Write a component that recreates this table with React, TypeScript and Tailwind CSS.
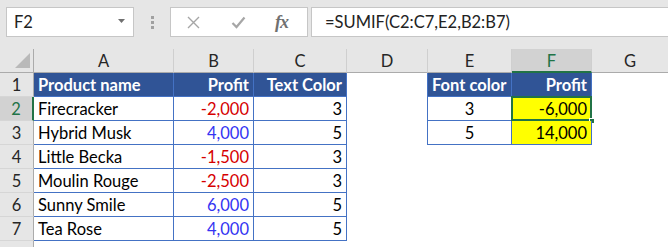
import React from "react";

const names = ["Firecracker", "Hybrid Musk", "Little Becka", "Moulin Rouge", "Sunny Smile", "Tea Rose"];
const profits: [string, boolean][] = [
  ["-2,000", true],
  ["4,000", false],
  ["-1,500", true],
  ["-2,500", true],
  ["6,000", false],
  ["4,000", false],
];
const colors = ["3", "5", "3", "3", "5", "5"];

const base = "h-[24px] overflow-hidden whitespace-nowrap leading-[24px] px-[4px]";
const colHead = base + " bg-[#e6e6e6] border-r border-b border-r-[#cfcfcf] border-b-[#ababab] text-center text-[#262626]";
const colHeadSel = base + " bg-[#d2d2d2] border-r border-b-2 border-r-[#cfcfcf] border-b-[#217346] text-center text-[#217346]";
const rowHead = base + " bg-[#e6e6e6] border-r border-b border-r-[#ababab] border-b-[#d6d6d6] text-center text-[#262626]";
const rowHeadSel = base + " bg-[#d2d2d2] border-r-2 border-b border-r-[#217346] border-b-[#d6d6d6] text-center text-[#217346]";
const tblHead = base + " bg-[#305496] text-white font-bold border-r border-b border-[#4472c4]";
const tblCell = base + " bg-white border-r border-b border-[#4472c4]";

function Toolbar() {
  return (
    <div className="h-[49px] bg-[#e6e6e6] flex items-start pt-[7px] pl-[6px]">
      <div className="w-[128px] h-[30px] bg-white border border-[#c6c6c6] flex items-center justify-between pl-[7px] pr-[8px]">
        <span className="text-[16.5px] text-[#222]">F2</span>
        <svg width="7" height="4" viewBox="0 0 7 4" className="mt-[-2px]">
          <polygon points="0,0 7,0 3.5,4" fill="#707070" />
        </svg>
      </div>
      <div className="ml-[17px] mt-[9px] flex flex-col gap-[2px]">
        <div className="w-[3px] h-[3px] bg-[#a0a0a0]" />
        <div className="w-[3px] h-[3px] bg-[#a0a0a0]" />
        <div className="w-[3px] h-[3px] bg-[#a0a0a0]" />
      </div>
      <div className="ml-[16px] w-[138px] h-[30px] bg-white border border-[#c6c6c6] flex items-center">
        <svg width="13" height="13" viewBox="0 0 13 13" className="ml-[16px]">
          <path d="M1 1 L12 12 M12 1 L1 12" stroke="#a6a6a6" strokeWidth="1.4" fill="none" />
        </svg>
        <svg width="15" height="13" viewBox="0 0 15 13" className="ml-[31px]">
          <path d="M1.5 7 L5.5 11 L13.5 1.5" stroke="#a6a6a6" strokeWidth="2.2" fill="none" strokeLinejoin="miter" />
        </svg>
        <span className="ml-[29px] [font-family:'Liberation_Serif',serif] italic font-bold text-[18px] text-[#707070] leading-none tracking-[-1px]">
          fx
        </span>
      </div>
      <div className="ml-[3px] flex-1 h-[30px] bg-white border border-[#c6c6c6] border-r-0 flex items-center pl-[13px]">
        <span className="text-[16.5px] text-[#222]">=SUMIF(C2:C7,E2,B2:B7)</span>
      </div>
    </div>
  );
}

export default function App() {
  return (
    <div className="w-[668px] h-[247px] overflow-hidden bg-white [font-family:Lato,sans-serif] text-[16.5px] text-black">
      <Toolbar />
      <div className="grid grid-cols-[34px_140px_80px_93px_81px_84px_80px_1fr]">
        {/* column headers */}
        <div className={base + " bg-[#e6e6e6] border-r border-b border-r-[#ababab] border-b-[#ababab] relative"}>
          <svg width="34" height="24" viewBox="0 0 34 24" className="absolute left-0 top-0">
            <polygon points="30,4 30,19 15,19" fill="#b9b9b9" />
          </svg>
        </div>
        <div className={colHead}>A</div>
        <div className={colHead}>B</div>
        <div className={colHead}>C</div>
        <div className={colHead}>D</div>
        <div className={colHead}>E</div>
        <div className={colHeadSel}>F</div>
        <div className={colHead + " border-r-0"}>G</div>

        {/* row 1 */}
        <div className={rowHead}>1</div>
        <div className={tblHead + " text-left"}>Product name</div>
        <div className={tblHead + " text-right"}>Profit</div>
        <div className={tblHead + " text-right"}>Text Color</div>
        <div className={base + " border-r border-[#4472c4]"} />
        <div className={tblHead + " text-left"}>Font color</div>
        <div className={tblHead + " text-right"}>Profit</div>
        <div className={base} />

        {names.map((name, i) => {
          const r = i + 2;
          const [val, neg] = profits[i];
          return (
            <React.Fragment key={r}>
              <div className={r === 2 ? rowHeadSel : rowHead}>{r}</div>
              <div className={tblCell + " text-left"}>{name}</div>
              <div className={tblCell + " text-right " + (neg ? "text-[#d60000]" : "text-[#3434f2]")}>{val}</div>
              <div className={tblCell + " text-right"}>{colors[i]}</div>
              <div className={r <= 3 ? base + " border-r border-[#4472c4]" : base} />
              {r <= 3 ? (
                <div className={tblCell + " text-center"}>{r === 2 ? "3" : "5"}</div>
              ) : (
                <div className={base} />
              )}
              {r <= 3 ? (
                <div className={tblCell + " text-right !bg-[#ffff00] relative overflow-visible"}>
                  {r === 2 ? "-6,000" : "14,000"}
                  {r === 2 && (
                    <>
                      <div className="absolute left-[-1px] top-[-1px] w-[81px] h-[25px] border-2 border-[#217346] pointer-events-none" />
                      <div className="absolute left-[77px] top-[21px] w-[6px] h-[6px] bg-[#217346] border border-white" />
                    </>
                  )}
                </div>
              ) : (
                <div className={base} />
              )}
              <div className={base} />
            </React.Fragment>
          );
        })}

        {/* row 8 partial (number hidden below the edge) */}
        <div className={rowHead} />
        <div className={base} />
        <div className={base} />
        <div className={base} />
        <div className={base} />
        <div className={base} />
        <div className={base} />
        <div className={base} />
      </div>
    </div>
  );
}
